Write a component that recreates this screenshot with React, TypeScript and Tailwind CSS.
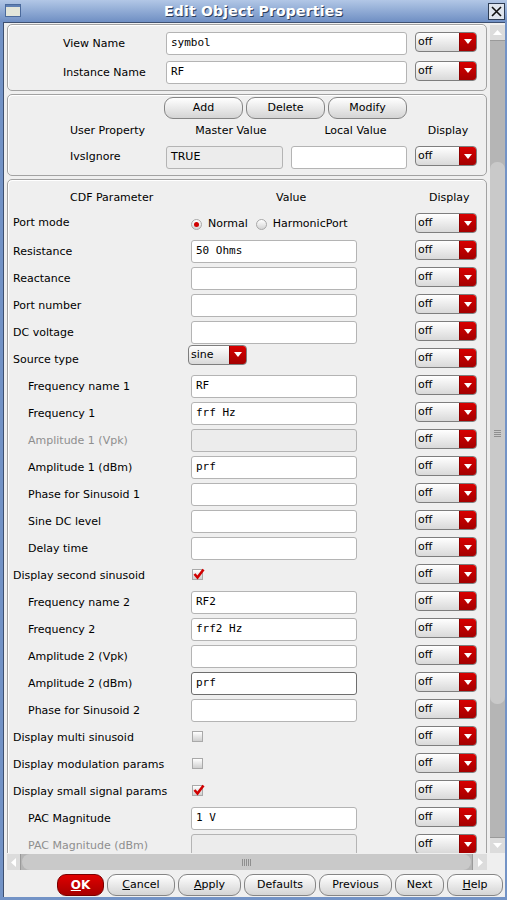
import React from 'react';
import { clsx } from 'clsx';

const ui = "font-['DejaVu_Sans',sans-serif]";
const mono = "font-['DejaVu_Sans_Mono',monospace]";

function Sel({ label = 'off', className = 'w-[62px]' }: { label?: string; className?: string }) {
  return (
    <div
      className={clsx(
        'flex h-[20px] shrink-0 overflow-hidden rounded-[4px] border border-[#7e7e7e] bg-gradient-to-b from-white to-[#d9d9d9]',
        className
      )}
    >
      <span className="flex-1 pl-[2px] text-[11px] leading-[18px] text-black">{label}</span>
      <span className="flex w-[17px] items-center justify-center border-l border-[#8c0000] bg-gradient-to-b from-[#d80000] to-[#a40000]">
        <svg width="8" height="5" viewBox="0 0 8 5">
          <path d="M0 0h8L4 5z" fill="#fff" />
        </svg>
      </span>
    </div>
  );
}

function Field({ value = '', disabled = false, focused = false, className = 'w-[166px]' }: { value?: string; disabled?: boolean; focused?: boolean; className?: string }) {
  return (
    <div
      className={clsx(
        'flex h-[23px] shrink-0 items-center rounded-[3px] border pl-[4px] text-[11px] text-black',
        mono,
        disabled ? 'bg-[#ececec]' : 'bg-white',
        focused ? 'border-[#6e6e6e]' : 'border-[#b4b4b4]',
        className
      )}
    >
      {value}
    </div>
  );
}

function Check({ on }: { on: boolean }) {
  return (
    <div className="relative h-[11px] w-[11px] border border-[#a9a9a9] bg-gradient-to-b from-white to-[#cfcfcf]">
      {on && (
        <svg className="absolute -left-[1px] -top-[2px]" width="13" height="12" viewBox="0 0 13 12">
          <path d="M2.5 6 L5.5 9.5 L11.5 1.5" stroke="#d00000" strokeWidth="2.6" fill="none" />
        </svg>
      )}
    </div>
  );
}

function Radio({ on, label }: { on: boolean; label: string }) {
  return (
    <div className="flex items-center gap-[6px]">
      <div className="flex h-[11px] w-[11px] items-center justify-center rounded-full border border-[#a8a8a8] bg-gradient-to-b from-white to-[#d4d4d4]">
        {on && <div className="h-[5px] w-[5px] rounded-full bg-[#d00000]" />}
      </div>
      <span className="text-[11px] text-black">{label}</span>
    </div>
  );
}

function Btn({ children, className }: { children: React.ReactNode; className: string }) {
  return (
    <div
      className={clsx(
        'flex h-[22px] shrink-0 items-center justify-center rounded-[9px] border border-[#858585] bg-gradient-to-b from-white to-[#d4d4d4] text-[11px] text-black',
        className
      )}
    >
      {children}
    </div>
  );
}

type Row =
  | { kind: 'field'; label: string; indent?: boolean; value?: string; disabled?: boolean; focused?: boolean }
  | { kind: 'check'; label: string; on: boolean }
  | { kind: 'source'; label: string };

const rows: Row[] = [
  { kind: 'field', label: 'Resistance', value: '50 Ohms' },
  { kind: 'field', label: 'Reactance' },
  { kind: 'field', label: 'Port number' },
  { kind: 'field', label: 'DC voltage' },
  { kind: 'source', label: 'Source type' },
  { kind: 'field', label: 'Frequency name 1', indent: true, value: 'RF' },
  { kind: 'field', label: 'Frequency 1', indent: true, value: 'frf Hz' },
  { kind: 'field', label: 'Amplitude 1 (Vpk)', indent: true, disabled: true },
  { kind: 'field', label: 'Amplitude 1 (dBm)', indent: true, value: 'prf' },
  { kind: 'field', label: 'Phase for Sinusoid 1', indent: true },
  { kind: 'field', label: 'Sine DC level', indent: true },
  { kind: 'field', label: 'Delay time', indent: true },
  { kind: 'check', label: 'Display second sinusoid', on: true },
  { kind: 'field', label: 'Frequency name 2', indent: true, value: 'RF2' },
  { kind: 'field', label: 'Frequency 2', indent: true, value: 'frf2 Hz' },
  { kind: 'field', label: 'Amplitude 2 (Vpk)', indent: true },
  { kind: 'field', label: 'Amplitude 2 (dBm)', indent: true, value: 'prf', focused: true },
  { kind: 'field', label: 'Phase for Sinusoid 2', indent: true },
  { kind: 'check', label: 'Display multi sinusoid', on: false },
  { kind: 'check', label: 'Display modulation params', on: false },
  { kind: 'check', label: 'Display small signal params', on: true },
  { kind: 'field', label: 'PAC Magnitude', indent: true, value: '1 V' },
  { kind: 'field', label: 'PAC Magnitude (dBm)', indent: true, disabled: true },
];

const box = 'w-[480px] rounded-[5px] border border-[#a2a2a2] shadow-[inset_1px_1px_0_#fff]';

export default function App() {
  return (
    <div className={clsx('flex h-[900px] w-[507px] flex-col overflow-hidden bg-[#7393c6] text-[11px] text-black', ui)}>
      {/* title bar */}
      <div className="relative flex h-[22px] shrink-0 items-center justify-center bg-gradient-to-b from-[#b2c7e6] to-[#6f8fc3]">
        <div className="absolute left-[5px] top-[4px] h-[13px] w-[16px] border border-[#4b6a9c] bg-[#e2e5da] shadow-[inset_0_2px_0_#5f80b4]" />
        <span className="text-[14px] font-bold tracking-[0.2px] text-white [text-shadow:1px_1px_0_#2c3e5c]">Edit Object Properties</span>
        <div className="absolute right-[2px] top-[3px] flex h-[17px] w-[17px] items-center justify-center border border-[#2e3d55] bg-[#dfe5ee]">
          <svg width="11" height="11" viewBox="0 0 11 11">
            <path d="M1 1L10 10M10 1L1 10" stroke="#111" strokeWidth="1.6" />
          </svg>
        </div>
      </div>

      {/* client area */}
      <div className="ml-[3px] mr-[2px] mb-[3px] flex flex-1 flex-col border-l border-t border-[#3e5070] bg-[#efefef]">
        <div className="flex h-[830px] shrink-0">
          {/* viewport */}
          <div className="w-[485px] shrink-0 overflow-hidden pl-[3px]">
            {/* names */}
            <div className={clsx(box, 'mt-[1px] h-[67px] pt-[7px]')}>
              <div className="flex h-[23px] items-center pl-[55px]">
                <span className="w-[103px] pt-[1px]">View Name</span>
                <Field value="symbol" className="w-[241px]" />
                <div className="ml-[8px] -mt-[4px]">
                  <Sel />
                </div>
              </div>
              <div className="mt-[6px] flex h-[23px] items-center pl-[55px]">
                <span className="w-[103px] pt-[1px]">Instance Name</span>
                <Field value="RF" className="w-[241px]" />
                <div className="ml-[8px] -mt-[4px]">
                  <Sel />
                </div>
              </div>
            </div>

            {/* user properties */}
            <div className={clsx(box, 'mt-[3px] h-[82px] pt-[2px]')}>
              <div className="flex gap-[3px] pl-[156px]">
                <Btn className="w-[79px]">Add</Btn>
                <Btn className="w-[79px]">Delete</Btn>
                <Btn className="w-[79px]">Modify</Btn>
              </div>
              <div className="flex h-[24px] items-center pl-[62px]">
                <span className="w-[96px]">User Property</span>
                <span className="w-[125px] pl-[5px] text-center">Master Value</span>
                <span className="w-[124px] pl-[5px] text-center">Local Value</span>
                <span className="w-[62px] pl-[4px] text-center">Display</span>
              </div>
              <div className="mt-[3px] flex h-[23px] items-start pl-[62px]">
                <span className="w-[96px] self-center">IvsIgnore</span>
                <div className={clsx('flex h-[23px] w-[117px] items-center rounded-[3px] border border-[#b4b4b4] bg-[#ececec] pl-[4px]', ui)}>TRUE</div>
                <Field className="ml-[8px] w-[116px]" />
                <div className="ml-[8px]">
                  <Sel />
                </div>
              </div>
            </div>

            {/* CDF parameters */}
            <div className={clsx(box, 'mt-[3px] h-[700px] pt-[7px]')}>
              <div className="flex h-[22px] items-center pl-[62px]">
                <span className="w-[206px]">CDF Parameter</span>
                <span className="w-[153px]">Value</span>
                <span>Display</span>
              </div>
              <div className="flex h-[29px] items-start pl-[5px]">
                <span className="w-[178px] self-center">Port mode</span>
                <div className="flex items-center gap-[8px] self-center pt-[2px]">
                  <Radio on label="Normal" />
                  <Radio on={false} label="HarmonicPort" />
                </div>
                <div className="ml-auto mr-[9px] mt-[4px]">
                  <Sel />
                </div>
              </div>
              {rows.map((r) => (
                <div key={r.label} className="flex h-[27px] items-start pl-[5px]">
                  <span
                    className={clsx(
                      'w-[178px] self-center pt-[1px]',
                      r.kind === 'field' && r.indent && 'pl-[15px]',
                      r.kind === 'field' && r.disabled ? 'text-[#8e8e8e]' : 'text-black'
                    )}
                  >
                    {r.label}
                  </span>
                  <div className="flex w-[224px] self-center">
                    {r.kind === 'field' && <Field value={r.value} disabled={r.disabled} focused={r.focused} />}
                    {r.kind === 'check' && (
                      <div className="pl-[1px] pb-[3px]">
                        <Check on={r.on} />
                      </div>
                    )}
                    {r.kind === 'source' && (
                      <div className="-ml-[3px] -mt-[10px]">
                        <Sel label="sine" className="w-[59px]" />
                      </div>
                    )}
                  </div>
                  <div className="mt-[2px]">
                    <Sel />
                  </div>
                </div>
              ))}
            </div>
          </div>

          {/* vertical scrollbar */}
          <div className="ml-[1px] mt-[2px] flex w-[15px] shrink-0 flex-col bg-[#b5b5b5]">
            <div className="flex h-[16px] items-center justify-center border-b border-[#9a9a9a] bg-[#dcdcdc]">
              <svg width="9" height="5" viewBox="0 0 9 5">
                <path d="M0 5h9L4.5 0z" fill="#fff" />
              </svg>
            </div>
            <div className="mt-[121px] flex h-[542px] items-center justify-center rounded-[7px] bg-[#c9c9c9]">
              <div className="flex flex-col gap-[1px]">
                {[0, 1, 2, 3].map((i) => (
                  <div key={i} className="h-[1px] w-[7px] bg-[#8f8f8f]" />
                ))}
              </div>
            </div>
            <div className="flex-1" />
            <div className="flex h-[16px] items-center justify-center border-t border-[#9a9a9a] bg-[#dcdcdc]">
              <svg width="9" height="5" viewBox="0 0 9 5">
                <path d="M0 0h9L4.5 5z" fill="#fff" />
              </svg>
            </div>
          </div>
        </div>

        {/* horizontal scrollbar */}
        <div className="mt-[1px] flex h-[16px] shrink-0 pl-[3px]">
          <div className="flex w-[480px] bg-[#b5b5b5]">
            <div className="flex w-[14px] items-center justify-center border-r border-[#9a9a9a] bg-[#dcdcdc]">
              <svg width="5" height="9" viewBox="0 0 5 9">
                <path d="M5 0v9L0 4.5z" fill="#fff" />
              </svg>
            </div>
            <div className="mx-[1px] flex flex-1 items-center justify-center rounded-[8px] bg-[#c9c9c9]">
              <div className="flex gap-[1px]">
                {[0, 1, 2, 3, 4].map((i) => (
                  <div key={i} className="h-[7px] w-[1px] bg-[#8f8f8f]" />
                ))}
              </div>
            </div>
            <div className="flex w-[15px] items-center justify-center border-l border-[#9a9a9a] bg-[#dcdcdc]">
              <svg width="5" height="9" viewBox="0 0 5 9">
                <path d="M0 0v9L5 4.5z" fill="#fff" />
              </svg>
            </div>
          </div>
        </div>

        {/* dialog buttons */}
        <div className="flex flex-1 items-start justify-end gap-[3px] pr-[2px] pt-[4px]">
          <div className="flex h-[22px] w-[47px] items-center justify-center rounded-[9px] border border-[#7a0000] bg-gradient-to-b from-[#e00000] to-[#a80000] text-[12px] font-bold text-white">
            <span className="underline">O</span>K
          </div>
          <Btn className="w-[68px]">
            <span className="underline">C</span>ancel
          </Btn>
          <Btn className="w-[63px]">
            <span className="underline">A</span>pply
          </Btn>
          <Btn className="w-[72px]">Defaults</Btn>
          <Btn className="w-[73px]">Previous</Btn>
          <Btn className="w-[49px]">Next</Btn>
          <Btn className="w-[56px]">
            <span className="underline">H</span>elp
          </Btn>
        </div>
      </div>
    </div>
  );
}
